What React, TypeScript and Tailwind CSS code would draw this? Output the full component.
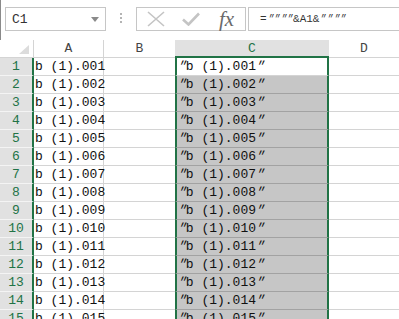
import React from 'react';

const GREEN = '#217346';

const rows = Array.from({ length: 15 }, (_, i) => i + 1);
const pad = (n: number) => String(n).padStart(3, '0');

// slanted double quote like the spreadsheet font draws it
function Q({ small }: { small?: boolean }) {
  return (
    <span className={`inline-block -skew-x-[24deg] ${small ? 'scale-x-[0.85]' : ''}`}>″</span>
  );
}

function Toolbar() {
  return (
    <div className="flex h-[40px] items-start pl-[4px] pt-[7px] border-l border-l-[#8a8a8a]">
      {/* name box */}
      <div className="relative flex h-[24px] w-[101px] shrink-0 items-center border border-[#c6c6c6] bg-white pl-[6px] text-[13px] text-[#333]">
        C1
        <svg className="absolute right-[6px] top-[9px]" width="8" height="5" viewBox="0 0 8 5">
          <path d="M0 0H8L4 5Z" fill="#8a8a8a" />
        </svg>
      </div>
      {/* dots */}
      <div className="ml-[14px] mt-[6px] flex w-[3px] flex-col gap-[2px]">
        <span className="h-[2px] w-[2px] bg-[#b4b4b4]" />
        <span className="h-[2px] w-[2px] bg-[#b4b4b4]" />
        <span className="h-[2px] w-[2px] bg-[#b4b4b4]" />
      </div>
      {/* cancel / enter / fx */}
      <div className="ml-[14px] flex h-[24px] w-[110px] shrink-0 items-center border border-[#c6c6c6] bg-white">
        <svg className="ml-[10px]" width="18" height="16" viewBox="0 0 18 16">
          <path d="M1 1L17 15M17 1L1 15" stroke="#c4c4c4" strokeWidth="1.6" fill="none" />
        </svg>
        <svg className="ml-[17px]" width="18" height="14" viewBox="0 0 18 14">
          <path d="M1 7.5L6.5 12.5L17 1.5" stroke="#c4c4c4" strokeWidth="2.6" fill="none" />
        </svg>
        <span className="ml-[19px] font-['Liberation_Serif',serif] text-[21px] italic leading-none text-[#6a6a6a]">
          fx
        </span>
      </div>
      {/* formula */}
      <div className="ml-[2px] flex h-[24px] w-[160px] shrink-0 items-center border border-[#c6c6c6] bg-white pl-[11px] text-[11px] text-[#333]">
        =<Q small /><Q small /><Q small /><Q small />&amp;A1&amp;<Q small /><Q small /><Q small /><Q small />
      </div>
    </div>
  );
}

function HeaderRow() {
  return (
    <div className="flex h-[18px]">
      <div className="relative w-[34px] shrink-0 border-r border-b border-[#d4d4d4] bg-white">
        <svg className="absolute right-[4px] bottom-[3px]" width="10" height="9" viewBox="0 0 10 9">
          <path d="M10 0V9H0Z" fill="#dcdcdc" />
        </svg>
      </div>
      <div className="flex w-[70px] shrink-0 items-center justify-center border-r border-b border-[#d4d4d4] text-[#444]">A</div>
      <div className="flex w-[71px] shrink-0 items-center justify-center border-b border-[#d4d4d4] text-[#444]">B</div>
      <div
        className="flex w-[154px] shrink-0 items-center justify-center border-b-2 bg-[#e1e1e1] text-[#217346]"
        style={{ borderBottomColor: GREEN }}
      >
        C
      </div>
      <div className="flex w-[70px] shrink-0 items-center justify-center border-b border-[#d4d4d4] text-[#444]">D</div>
    </div>
  );
}

function Row({ n }: { n: number }) {
  const active = n === 1;
  const v = `b (1).${pad(n)}`;
  return (
    <div className="flex h-[18px]">
      <div className="flex w-[34px] shrink-0 items-center justify-center border-r-2 border-r-[#217346] border-b border-b-[#f4f4f4] bg-[#e1e1e1] text-[#217346]">
        {n}
      </div>
      <div className="flex w-[70px] shrink-0 items-center whitespace-nowrap border-r border-b border-[#d4d4d4] pl-[1px]">
        {v}
      </div>
      <div className="w-[71px] shrink-0 border-b border-[#d4d4d4]" />
      <div
        className={`flex w-[154px] shrink-0 items-center whitespace-nowrap border-x-2 border-x-[#217346] border-b pl-[1px] ${
          active ? 'bg-white border-b-[#d4d4d4]' : 'bg-[#c6c6c6] border-b-[#a2a2a2]'
        }`}
      >
        <Q />
        {v}
        <Q />
      </div>
      <div className="w-[70px] shrink-0 border-b border-[#d4d4d4]" />
    </div>
  );
}

export default function App() {
  return (
    <div className="h-[319px] w-[399px] overflow-hidden bg-white font-['Liberation_Mono','DejaVu_Sans_Mono',monospace] text-[13px] leading-[17px] text-[#111]">
      <Toolbar />
      <HeaderRow />
      {rows.map((n) => (
        <Row key={n} n={n} />
      ))}
    </div>
  );
}
